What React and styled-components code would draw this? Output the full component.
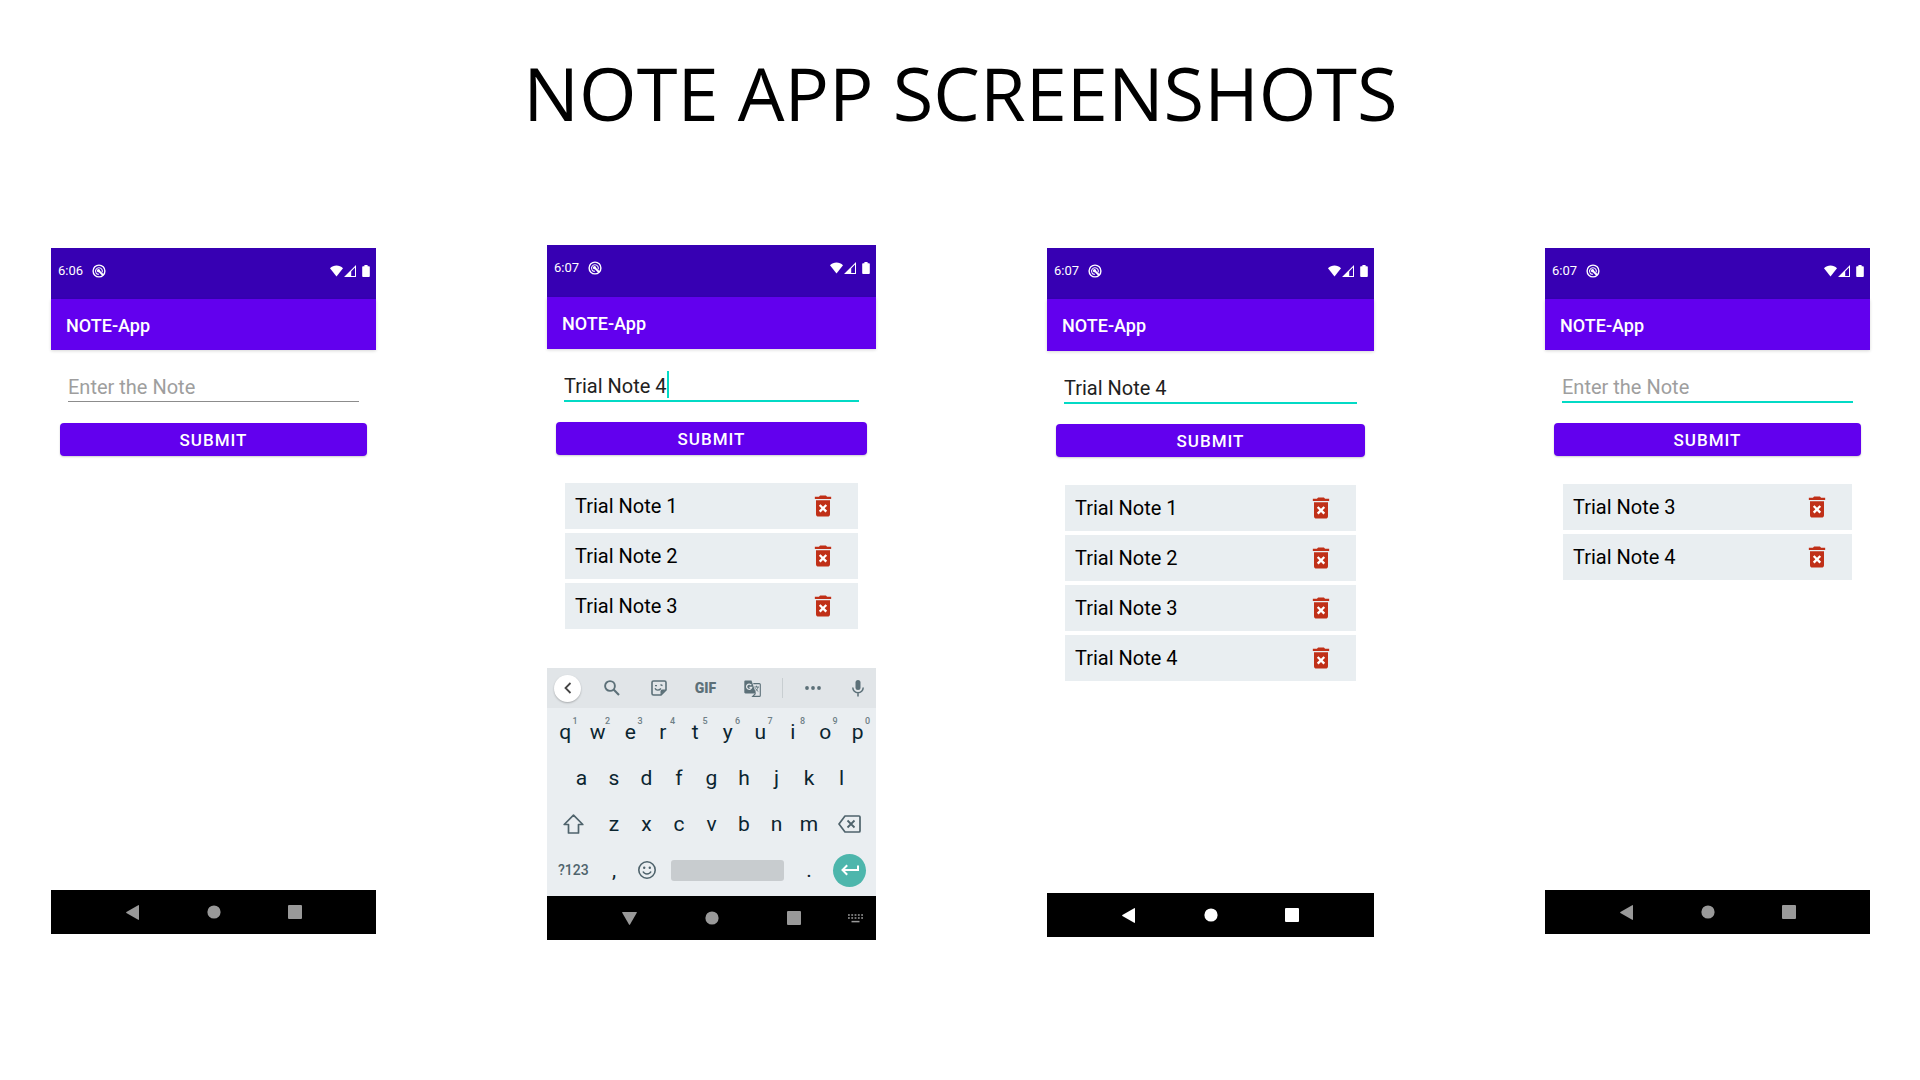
import React from "react";
import styled, { createGlobalStyle, css } from "styled-components";

const GlobalStyle = createGlobalStyle`
  *, *::before, *::after { box-sizing: border-box; }
  body { margin: 0; background: #fff; }
  button, input { font: inherit; color: inherit; margin: 0; padding: 0; border: 0; background: none; }
  button { cursor: pointer; }
  svg { display: block; flex: none; }
`;

const Page = styled.main`
  font-family: Roboto, "Liberation Sans", sans-serif;
  padding: 39px 50px 0 51px;
`;

const Title = styled.h1`
  margin: 0;
  font: 400 74px/108px "Open Sans", "Noto Sans", sans-serif;
  text-align: center;
  color: #000;
`;

const Gallery = styled.div`
  display: grid;
  grid-template-columns: 325fr 329fr 327fr 325fr;
  column-gap: 171px;
  align-items: start;
  padding-top: 101px;
`;

const Phone = styled.section`
  display: flex;
  flex-direction: column;
  aspect-ratio: ${(p) => p.$ratio};
  margin-top: ${(p) => (p.$raised ? "-3px" : "0")};
`;

const StatusBar = styled.div`
  display: flex;
  align-items: center;
  height: ${(p) => p.$height}px;
  padding: 0 6px 6px 7px;
  background: #3700b3;
  color: #fff;
  font-size: 13px;
  line-height: 16px;
`;

const StatusIcons = styled.div`
  display: flex;
  align-items: center;
  gap: 1px;
  margin-left: auto;
  svg:last-child { margin-left: 5px; }
`;

const Notice = styled.span`
  margin-left: 9px;
`;

const AppBar = styled.header`
  display: flex;
  align-items: center;
  height: ${(p) => p.$height}px;
  padding: 2px 15px 0;
  background: #6200ee;
  color: #fff;
  box-shadow: 0 1px 3px rgba(0, 0, 0, 0.16);
  h2 { margin: 0; font-size: 18px; line-height: 24px; font-weight: 500; }
`;

const Form = styled.form`
  padding: 20px 9px 0;
`;

const Field = styled.div`
  display: flex;
  align-items: center;
  height: ${(p) => (p.$active ? "33px" : "32px")};
  margin: 0 8px ${(p) => (p.$active ? "20px" : "21px")};
  border-bottom: ${(p) => (p.$active ? "2px solid #03dac5" : "1px solid #8c8c8c")};
`;

const NoteInput = styled.input`
  width: 100%;
  height: 30px;
  padding-top: 2px;
  font-size: 20px;
  color: #212121;
  outline: none;
  ${(p) => p.$editing && css`
    width: auto;
    field-sizing: content;
  `}
  &::placeholder { color: #9e9e9e; opacity: 1; }
`;

const Caret = styled.span`
  width: 2px;
  height: 27px;
  background: #03dac5;
`;

const Submit = styled.button`
  display: block;
  width: 100%;
  height: 33px;
  padding-top: 1px;
  border-radius: 4px;
  background: #6200ee;
  color: #fff;
  font-size: 17px;
  font-weight: 500;
  line-height: 24px;
  letter-spacing: 1px;
  box-shadow: 0 1px 2px rgba(0, 0, 0, 0.2);
`;

const NoteList = styled.ul`
  list-style: none;
  display: grid;
  gap: 4px;
  margin: 28px 18px 0;
  padding: 0;
`;

const NoteRow = styled.li`
  display: flex;
  align-items: center;
  justify-content: space-between;
  height: 46px;
  padding: 0 21px 0 10px;
  background: #e9eef1;
  color: #000;
  font-size: 20px;
  line-height: 24px;
`;

const DeleteButton = styled.button`
  color: #c03018;
`;

const NavBar = styled.nav`
  display: grid;
  grid-template-columns: 1fr 2fr 2fr 2fr 1fr;
  height: 44px;
  background: #000;
  color: ${(p) => (p.$bright ? "#fff" : "#999")};
  button { display: grid; place-items: center; }
  button:first-child { grid-column: 2; }
`;

const Spacer = styled.div`
  flex: 1;
`;

const Keyboard = styled.div`
  background: #eaeef1;
  color: #0b2530;
`;

const Tools = styled.div`
  display: grid;
  grid-template-columns: 41fr 47fr 47fr 47fr 47fr 12fr 49fr 39fr;
  align-items: center;
  height: 40px;
  background: #e1e5e8;
  color: #5c7078;
`;

const Tool = styled.button`
  display: flex;
  align-items: center;
  justify-content: center;
  font-size: 14px;
  font-weight: 900;
  line-height: 16px;
  &:last-child { justify-content: flex-end; padding-right: 12px; }
`;

const Round = styled.span`
  display: grid;
  place-items: center;
  width: ${(p) => p.$size};
  height: ${(p) => p.$size};
  border-radius: 50%;
  background: ${(p) => p.$fill};
  color: ${(p) => p.$ink};
  box-shadow: ${(p) => (p.$lifted ? "0 1px 2px rgba(0, 0, 0, 0.25)" : "none")};
`;

const Divider = styled.span`
  justify-self: center;
  width: 1px;
  height: 20px;
  background: #c8ced1;
`;

const Keys = styled.div`
  display: grid;
  grid-template-columns: repeat(20, 1fr);
  grid-auto-rows: 46px;
  padding: 1px 2px 3px;
`;

const Key = styled.button`
  position: relative;
  display: grid;
  place-items: center;
  grid-column: ${(p) => (p.$start ? `${p.$start} / ` : "")}span ${(p) => p.$span || 2};
  font-size: ${(p) => (p.$small ? "14px" : "21px")};
  font-weight: ${(p) => (p.$small ? 500 : 400)};
  line-height: 24px;
  color: ${(p) => (p.$small ? "#4f636c" : "inherit")};
`;

const Hint = styled.sup`
  position: absolute;
  top: 7px;
  right: 4px;
  font-size: 9px;
  font-weight: 500;
  line-height: 10px;
  color: #6e7e86;
`;

const SpaceBar = styled.span`
  width: calc(100% - 17px);
  height: 21px;
  border-radius: 3px;
  background: #c8cccf;
`;

const Icon = ({ size = 24, width, height, box = "0 0 24 24", children }) => (
  <svg width={width || size} height={height || size} viewBox={box} fill="currentColor" aria-hidden="true">
    {children}
  </svg>
);

const line = { fill: "none", stroke: "currentColor" };

const NoticeIcon = () => (
  <Icon size={14} box="0 0 14 14">
    <circle cx="7" cy="7" r="5.9" {...line} strokeWidth="1.4" />
    <path d="M3.8 8.4A3.4 3.4 0 1 1 10.1 8.400M3.8 8.400C4.300 9.500 5.400 10.300 6.800 10.400" {...line} strokeWidth="1.1" />
    <path d="M6.600 6.600L11.200 11.200" {...line} strokeWidth="2" />
    <circle cx="6.500" cy="6.700" r="1.600" />
  </Icon>
);

const WifiIcon = () => (
  <Icon width={13} height={12} box="0 0 13 12">
    <path d="M6.5 11.500L0 3.200C1.800 1.400 4 .5 6.500.5s4.700.9 6.500 2.700z" />
  </Icon>
);

const SignalIcon = () => (
  <Icon width={12} height={12} box="0 0 12 12">
    <path d="M0 12L12 0v12zM7.200 11h3.800V2.600L7.200 6.400z" fillRule="evenodd" />
  </Icon>
);

const BatteryIcon = () => (
  <Icon width={8} height={12} box="0 0 8 12">
    <path d="M2.400 0h3.200v1.300H7c.5 0 .8.3.8.8V11c0 .5-.3.9-.8.9H1c-.5 0-.8-.4-.8-.9V2.100c0-.5.3-.8.8-.8h1.400z" />
  </Icon>
);

const TrashIcon = () => (
  <Icon size={28}>
    <path d="M8 10h8v8H8z" fill="#fff" />
    <path d="M6 19c0 1.100.9 2 2 2h8c1.100 0 2-.9 2-2V7H6v12zm2.460-7.120l1.410-1.410L12 12.590l2.120-2.120 1.410 1.410L13.410 14l2.120 2.120-1.410 1.410L12 15.410l-2.120 2.120-1.410-1.410L10.590 14l-2.130-2.120zM15.500 4l-1-1h-5l-1 1H5v2h14V4z" />
  </Icon>
);

const BackIcon = () => (
  <Icon width={13} height={15} box="0 0 13 15"><path d="M12.200.2c.5-.2.8 0 .8.5v13.600c0 .5-.3.7-.8.5L.4 8c-.4-.3-.4-.7 0-1z" /></Icon>
);
const HideIcon = () => (
  <Icon width={15} height={13} box="0 0 15 13"><path d="M.2.8C0 .3.200 0 .7 0h13.600c.5 0 .7.3.5.8L8 12.600c-.3.4-.7.4-1 0z" /></Icon>
);
const HomeIcon = () => <Icon size={14} box="0 0 14 14"><circle cx="7" cy="7" r="6.6" /></Icon>;
const RecentIcon = () => <Icon size={14} box="0 0 14 14"><rect width="14" height="14" rx="1" /></Icon>;
const SwitchKeyboardIcon = () => (
  <Icon width={15} height={9} box="0 0 15 9">
    <path d="M0 1h15M0 4h15" {...line} strokeWidth="1.6" strokeDasharray="1.8 1.5" />
    <path d="M3.500 7.600h8" {...line} strokeWidth="1.5" />
  </Icon>
);

const ChevronIcon = () => (
  <Icon width={8} height={12} box="0 0 8 12"><path d="M6.500 1L1.500 6l5 5" {...line} strokeWidth="1.800" /></Icon>
);
const SearchIcon = () => (
  <Icon size={16} box="0 0 16 16">
    <circle cx="6" cy="6" r="4.900" {...line} strokeWidth="1.900" />
    <path d="M9.600 9.600l5.400 5.400" {...line} strokeWidth="2.100" />
  </Icon>
);
const StickerIcon = () => (
  <Icon size={16} box="0 0 16 16">
    <path d="M2.500 1h11c.8 0 1.500.7 1.500 1.500V10l-5 5H2.500C1.700 15 1 14.300 1 13.500v-11C1 1.700 1.700 1 2.500 1z" {...line} strokeWidth="1.600" />
    <path d="M9.500 15v-3.500c0-1.100.9-2 2-2H15z" />
    <path d="M4 5.600h2M9.500 4.600l2 1M4 8.300c1 2.400 4 2.400 6 .2" {...line} strokeWidth="1.400" />
  </Icon>
);
const TranslateIcon = () => (
  <Icon size={17} box="0 0 17 17">
    <path d="M1.500.5h6L12 13.500H1.500c-.7 0-1.200-.5-1.200-1.200V1.700C.3 1 .8.5 1.500.5z" />
    <path d="M7.300 5.200A2.600 2.600 0 1 0 7.700 7.300H5.400" fill="none" stroke="#e1e5e8" strokeWidth="1.300" />
    <path d="M9.300 3.600h6c.6 0 1 .4 1 1v10.800c0 .6-.4 1-1 1H8.700L11.500 13.500" {...line} strokeWidth="1.100" />
    <path d="M10.300 7h4.700M12.500 5.700V7M14 7c-.3 2-1.500 3.400-2.700 4.300M11.500 8.300c.6 1.300 1.700 2.500 2.800 3.200" {...line} strokeWidth=".9" />
  </Icon>
);
const DotsIcon = () => (
  <Icon width={16} height={4} box="0 0 16 4">
    <circle cx="2" cy="2" r="1.900" /><circle cx="8" cy="2" r="1.900" /><circle cx="14" cy="2" r="1.900" />
  </Icon>
);
const MicIcon = () => (
  <Icon width={12} height={17} box="0 0 12 17">
    <rect x="3.500" y="0" width="5" height="10" rx="2.500" />
    <path d="M.8 7.500a5.200 5.200 0 0 0 10.400 0M6 12.500V16.500" {...line} strokeWidth="1.500" />
  </Icon>
);
const ShiftIcon = () => (
  <Icon width={21} height={20} box="0 0 21 20">
    <path d="M10.500 1.200L1.200 10.500H5.500V19h10v-8.500h4.300z" {...line} strokeWidth="1.700" strokeLinejoin="round" />
  </Icon>
);
const BackspaceIcon = () => (
  <Icon width={23} height={18} box="0 0 23 18">
    <path d="M7 1h14c.6 0 1 .4 1 1v14c0 .6-.4 1-1 1H7L1 9z" {...line} strokeWidth="1.700" strokeLinejoin="round" />
    <path d="M9.500 5.500l7 7M16.500 5.500l-7 7" {...line} strokeWidth="1.800" />
  </Icon>
);
const SmileIcon = () => (
  <Icon size={18} box="0 0 18 18">
    <circle cx="9" cy="9" r="8.200" {...line} strokeWidth="1.600" />
    <circle cx="6.200" cy="6.800" r="1.200" /><circle cx="11.800" cy="6.800" r="1.200" />
    <path d="M5 10.500c1.500 3.200 6.500 3.200 8 0" {...line} strokeWidth="1.500" />
  </Icon>
);
const EnterIcon = () => (
  <Icon width={18} height={12} box="0 0 18 12">
    <path d="M17 1.500V6H1.500M6.200 1.200L1.500 6l4.700 4.800" {...line} strokeWidth="2" />
  </Icon>
);

function SoftKeyboard() {
  return (
    <Keyboard>
      <Tools>
        <Tool aria-label="Collapse toolbar">
          <Round $size="27px" $fill="#fff" $ink="#444" $lifted><ChevronIcon /></Round>
        </Tool>
        <Tool aria-label="Search"><SearchIcon /></Tool>
        <Tool aria-label="Stickers"><StickerIcon /></Tool>
        <Tool>GIF</Tool>
        <Tool aria-label="Translate"><TranslateIcon /></Tool>
        <Divider />
        <Tool aria-label="More"><DotsIcon /></Tool>
        <Tool aria-label="Voice input"><MicIcon /></Tool>
      </Tools>
      <Keys>
        {[..."qwertyuiop"].map((k, i) => (
          <Key key={k}>{k}<Hint>{(i + 1) % 10}</Hint></Key>
        ))}
        {[..."asdfghjkl"].map((k, i) => (
          <Key key={k} $start={i === 0 ? 2 : undefined}>{k}</Key>
        ))}
        <Key $start={1} $span={3} $small aria-label="Shift"><ShiftIcon /></Key>
        {[..."zxcvbnm"].map((k) => <Key key={k}>{k}</Key>)}
        <Key $span={3} $small aria-label="Backspace"><BackspaceIcon /></Key>
        <Key $span={3} $small>?123</Key>
        <Key>,</Key>
        <Key $small aria-label="Emoji"><SmileIcon /></Key>
        <Key $span={8} aria-label="Space"><SpaceBar /></Key>
        <Key>.</Key>
        <Key $span={3} aria-label="Enter">
          <Round $size="33px" $fill="#4db6ac" $ink="#fff"><EnterIcon /></Round>
        </Key>
      </Keys>
    </Keyboard>
  );
}

function Screen({ time, ratio, bars = [51, 51], value = "", active, editing, notes = [], bright }) {
  return (
    <Phone $ratio={ratio} $raised={editing}>
      <StatusBar $height={bars[0]}>
        {time}
        <Notice><NoticeIcon /></Notice>
        <StatusIcons><WifiIcon /><SignalIcon /><BatteryIcon /></StatusIcons>
      </StatusBar>
      <AppBar $height={bars[1]}><h2>NOTE-App</h2></AppBar>
      <Form onSubmit={(e) => e.preventDefault()}>
        <Field $active={active}>
          <NoteInput aria-label="Note" placeholder="Enter the Note" defaultValue={value} $editing={editing} />
          {editing && <Caret />}
        </Field>
        <Submit>SUBMIT</Submit>
      </Form>
      <NoteList>
        {notes.map((n) => (
          <NoteRow key={n}>
            {`Trial Note ${n}`}
            <DeleteButton aria-label={`Delete Trial Note ${n}`}><TrashIcon /></DeleteButton>
          </NoteRow>
        ))}
      </NoteList>
      <Spacer />
      {editing && <SoftKeyboard />}
      <NavBar $bright={bright}>
        <button aria-label="Back">{editing ? <HideIcon /> : <BackIcon />}</button>
        <button aria-label="Home"><HomeIcon /></button>
        <button aria-label="Recent apps"><RecentIcon /></button>
        {editing && <button aria-label="Switch keyboard"><SwitchKeyboardIcon /></button>}
      </NavBar>
    </Phone>
  );
}

export default function App() {
  return (
    <Page>
      <GlobalStyle />
      <Title>NOTE APP SCREENSHOTS</Title>
      <Gallery>
        <Screen time="6:06" ratio="325 / 686" />
        <Screen time="6:07" ratio="329 / 695" bars={[52, 52]} value="Trial Note 4" active editing notes={[1, 2, 3]} />
        <Screen time="6:07" ratio="327 / 689" bars={[51, 52]} value="Trial Note 4" active notes={[1, 2, 3, 4]} bright />
        <Screen time="6:07" ratio="325 / 686" active notes={[3, 4]} />
      </Gallery>
    </Page>
  );
}
